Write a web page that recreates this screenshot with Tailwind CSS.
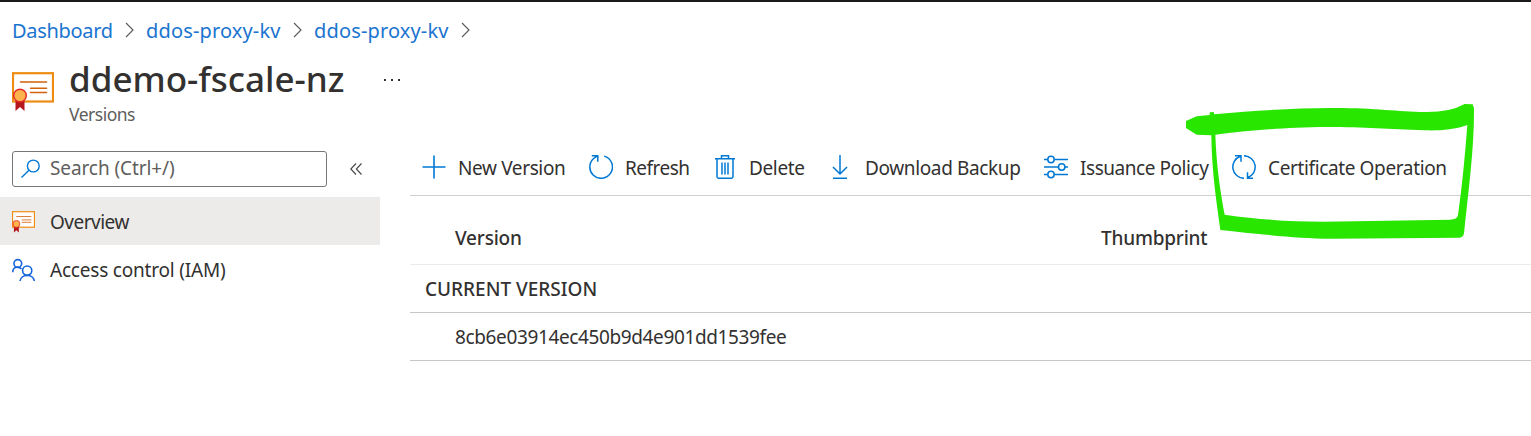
<!DOCTYPE html>
<html lang="en">
<head>
<meta charset="utf-8">
<title>ddemo-fscale-nz - Versions</title>
<script src="https://cdn.jsdelivr.net/npm/@tailwindcss/browser@4"></script>
</head>
<body class="bg-white">
<svg class="hidden">
  <symbol id="cert" viewBox="0 0 42 40">
    <rect x="1" y="1.2" width="40" height="28.3" fill="#fff" stroke="#ef8d13" stroke-width="2.2"/>
    <path d="M8.5 10H34.500M18.500 16.200H34.500M18.500 20.600H34.500" stroke="#d4610c" stroke-width="1.5" stroke-linecap="round"/>
    <path d="M3.500 27V39L8 35L12.500 39V27Z" fill="#b5171c"/>
    <circle cx="8" cy="23.500" r="6.300" fill="#ffb34d" stroke="#e62c29" stroke-width="1.500"/>
  </symbol>
</svg>
<main class="relative w-[1531px] h-[436px] overflow-hidden bg-white border-t-2 border-[#1b1a19] whitespace-nowrap text-[19px] leading-6 tracking-[-0.37px] text-[#323130] font-['Noto_Sans','Open_Sans',sans-serif]">
  <nav class="flex h-[57px] items-center pl-3 text-[#1a74d0]">
    <a class="w-[113px] tracking-[-0.3px] text-[20px]">Dashboard</a>
    <svg class="w-[21px] h-4 -mt-[2px]" viewBox="0 0 21 16" fill="none" stroke="#605e5c" stroke-width="1.2"><path d="M1 1l7 7-7 7"/></svg>
    <a class="w-[147px] tracking-[0.15px] text-[20px]">ddos-proxy-kv</a>
    <svg class="w-[21px] h-4 -mt-[2px]" viewBox="0 0 21 16" fill="none" stroke="#605e5c" stroke-width="1.2"><path d="M1 1l7 7-7 7"/></svg>
    <a class="w-[147px] tracking-[0.15px] text-[20px]">ddos-proxy-kv</a>
    <svg class="w-[21px] h-4 -mt-[2px]" viewBox="0 0 21 16" fill="none" stroke="#605e5c" stroke-width="1.2"><path d="M1 1l7 7-7 7"/></svg>
  </nav>
  <header class="flex h-[80px] pl-3">
    <svg class="w-[42px] h-10 mt-[13px]"><use href="#cert"/></svg>
    <div class="ml-[15px] w-[314px]">
      <h1 class="text-[35px] leading-[40px] font-medium tracking-[0px]">ddemo-fscale-nz</h1>
      <p class="text-[17.500px] leading-6 text-[#605e5c] mt-[3px] tracking-[-0.5px]">Versions</p>
    </div>
    <svg class="w-5 h-3 mt-4" viewBox="0 0 20 12" fill="#323130"><path d="M1 4h2v2H1zM8 4h2v2H8zM15 4h2v2h-2z"/></svg>
  </header>
  <div class="flex">
    <aside class="w-[380px]">
      <div class="flex items-center h-[60px] pl-3">
        <div class="flex items-center w-[315px] h-9 border border-[#797775] rounded-[3px] pl-2 text-[#605e5c]">
          <svg class="w-5 h-5" viewBox="0 0 20 20" fill="none" stroke="#0078d4" stroke-width="1.4"><circle cx="12.300" cy="7" r="5.900"/><path d="M8 11.200L.5 18.500"/></svg>
          <span class="ml-[9px] -mt-[2px] tracking-[-0.1px]">Search (Ctrl+/)</span>
        </div>
        <svg class="w-3 h-3 ml-[23px]" viewBox="0 0 12 12" fill="none" stroke="#484644" stroke-width="1.100"><path d="M6 .5L.8 6L6 11.500M11.500 .5L6.300 6l5.200 5.500"/></svg>
      </div>
      <div class="flex items-center h-12 -mt-[2px] pl-3 bg-[#ecebe9]">
        <svg class="w-[23px] h-[22px] mt-px" viewBox="0 0 42 40"><use href="#cert" width="42" height="40"/></svg>
        <span class="ml-[15px] mt-[2px] tracking-[-0.5px]">Overview</span>
      </div>
      <div class="flex items-center h-12 pl-3">
        <svg class="w-[23px] h-6 mt-[2px]" viewBox="0 0 23 24" fill="none" stroke="#1765dc" stroke-width="1.600"><circle cx="5.800" cy="5.500" r="3.900"/><path d="M.8 14.200C.8 8.500 6.500 8 9.500 11"/><circle cx="15.200" cy="12.600" r="4.600"/><path d="M8 23C9 15.500 21.500 15.500 22.300 23"/></svg>
        <span class="ml-[15px] mt-[2px] tracking-[-0.2px]">Access control (IAM)</span>
      </div>
    </aside>
    <section class="ml-[30px] w-[1121px]">
      <div class="flex items-center h-[57px] pl-3 border-b border-[#d2d0ce]">
        <div class="flex w-[167px] items-center gap-3">
          <svg class="w-6 h-6 shrink-0" viewBox="0 0 24 24" stroke="#0078d4" stroke-width="1.600"><path d="M12 .5V23.500M.5 12H23.500"/></svg>
          <span class="pt-[2px]">New Version</span>
        </div>
        <div class="flex w-[124px] items-center gap-3">
          <svg class="w-6 h-6 shrink-0" viewBox="0 0 24 24" fill="none" stroke="#0078d4" stroke-width="1.500"><path d="M15.200 1.100A11.300 11.300 0 1 1 6.500 2.200L8.700 1M2.800 .8H8.800V6.800"/></svg>
          <span class="pt-[2px] tracking-[-0.5px]">Refresh</span>
        </div>
        <div class="flex w-[116px] items-center gap-3">
          <svg class="w-6 h-6 shrink-0" viewBox="0 0 24 24" fill="none" stroke="#0078d4" stroke-width="1.500"><path d="M2 3.700H22M8.500 3.500V.8H15.500V3.500M4 3.700V21.500Q4 23.200 5.500 23.200H18.500Q20 23.200 20 21.500V3.700M9 7.500V19.500M12 7.500V19.500M15 7.500V19.500"/></svg>
          <span class="pt-[2px]">Delete</span>
        </div>
        <div class="flex w-[215px] items-center gap-3">
          <svg class="w-6 h-6 shrink-0" viewBox="0 0 24 24" fill="none" stroke="#0078d4" stroke-width="1.500"><path d="M11 0V19M4 12L11 19L18 12M4 23.200H18"/></svg>
          <span class="pt-[2px]">Download Backup</span>
        </div>
        <div class="flex w-[188px] items-center gap-3">
          <svg class="w-6 h-6 shrink-0" viewBox="0 0 24 24" fill="none" stroke="#0078d4" stroke-width="1.500"><path d="M0 4.500H3.700M10.300 4.500H24M0 12H14.500M21 12H24M0 19.500H3.700M10.300 19.500H24"/><circle cx="7" cy="4.500" r="3.200"/><circle cx="17.700" cy="12" r="3.200"/><circle cx="7" cy="19.500" r="3.200"/></svg>
          <span class="pt-[2px] tracking-[-0.45px]">Issuance Policy</span>
        </div>
        <div class="flex items-center gap-3">
          <svg class="w-6 h-6 shrink-0" viewBox="0 0 24 24" fill="none" stroke="#0078d4" stroke-width="1.500"><path d="M12 23.300A11.300 11.300 0 0 1 8.500 1.300M3 .8H9V6.800M12 .7A11.300 11.300 0 0 1 15.500 22.700M21 23.200H15.500V17.200"/></svg>
          <span class="pt-[2px]">Certificate Operation</span>
        </div>
      </div>
      <div class="flex items-center h-[69px] pt-[15px] pl-[45px] border-b border-[#edebe9] font-medium tracking-[-0.2px]">
        <span class="w-[646px]">Version</span><span>Thumbprint</span>
      </div>
      <div class="flex items-center h-12 pl-[15px] border-b border-[#c8c6c4] font-medium tracking-[0px]"><span>CURRENT VERSION</span></div>
      <div class="flex items-center h-12 pl-[45px] border-b border-[#c8c6c4]"><span>8cb6e03914ec450b9d4e901dd1539fee</span></div>
    </section>
  </div>
  <svg class="absolute left-[1180px] top-[93px] w-[310px] h-[155px]" viewBox="0 0 930 465" fill="#28e600"><path fill-rule="evenodd" d="M18 78L50 64L89 60V52L101 51L103 58Q300 40 450 39C580 38 650 50 735 51Q810 52 854 27L878 28L882 40C883 160 865 290 852 415Q850 426 840 428L450 431C350 430 220 416 121 405C110 320 96 240 94 121L50 119L18 99ZM106 119C109 210 121 290 134 359C240 374 330 380 430 380L810 374Q832 374 834 360C847 270 855 180 862 90C820 105 780 107 735 106C620 101 560 97 440 96C300 97 200 108 106 119Z"/></svg>
</main>
</body>
</html>
